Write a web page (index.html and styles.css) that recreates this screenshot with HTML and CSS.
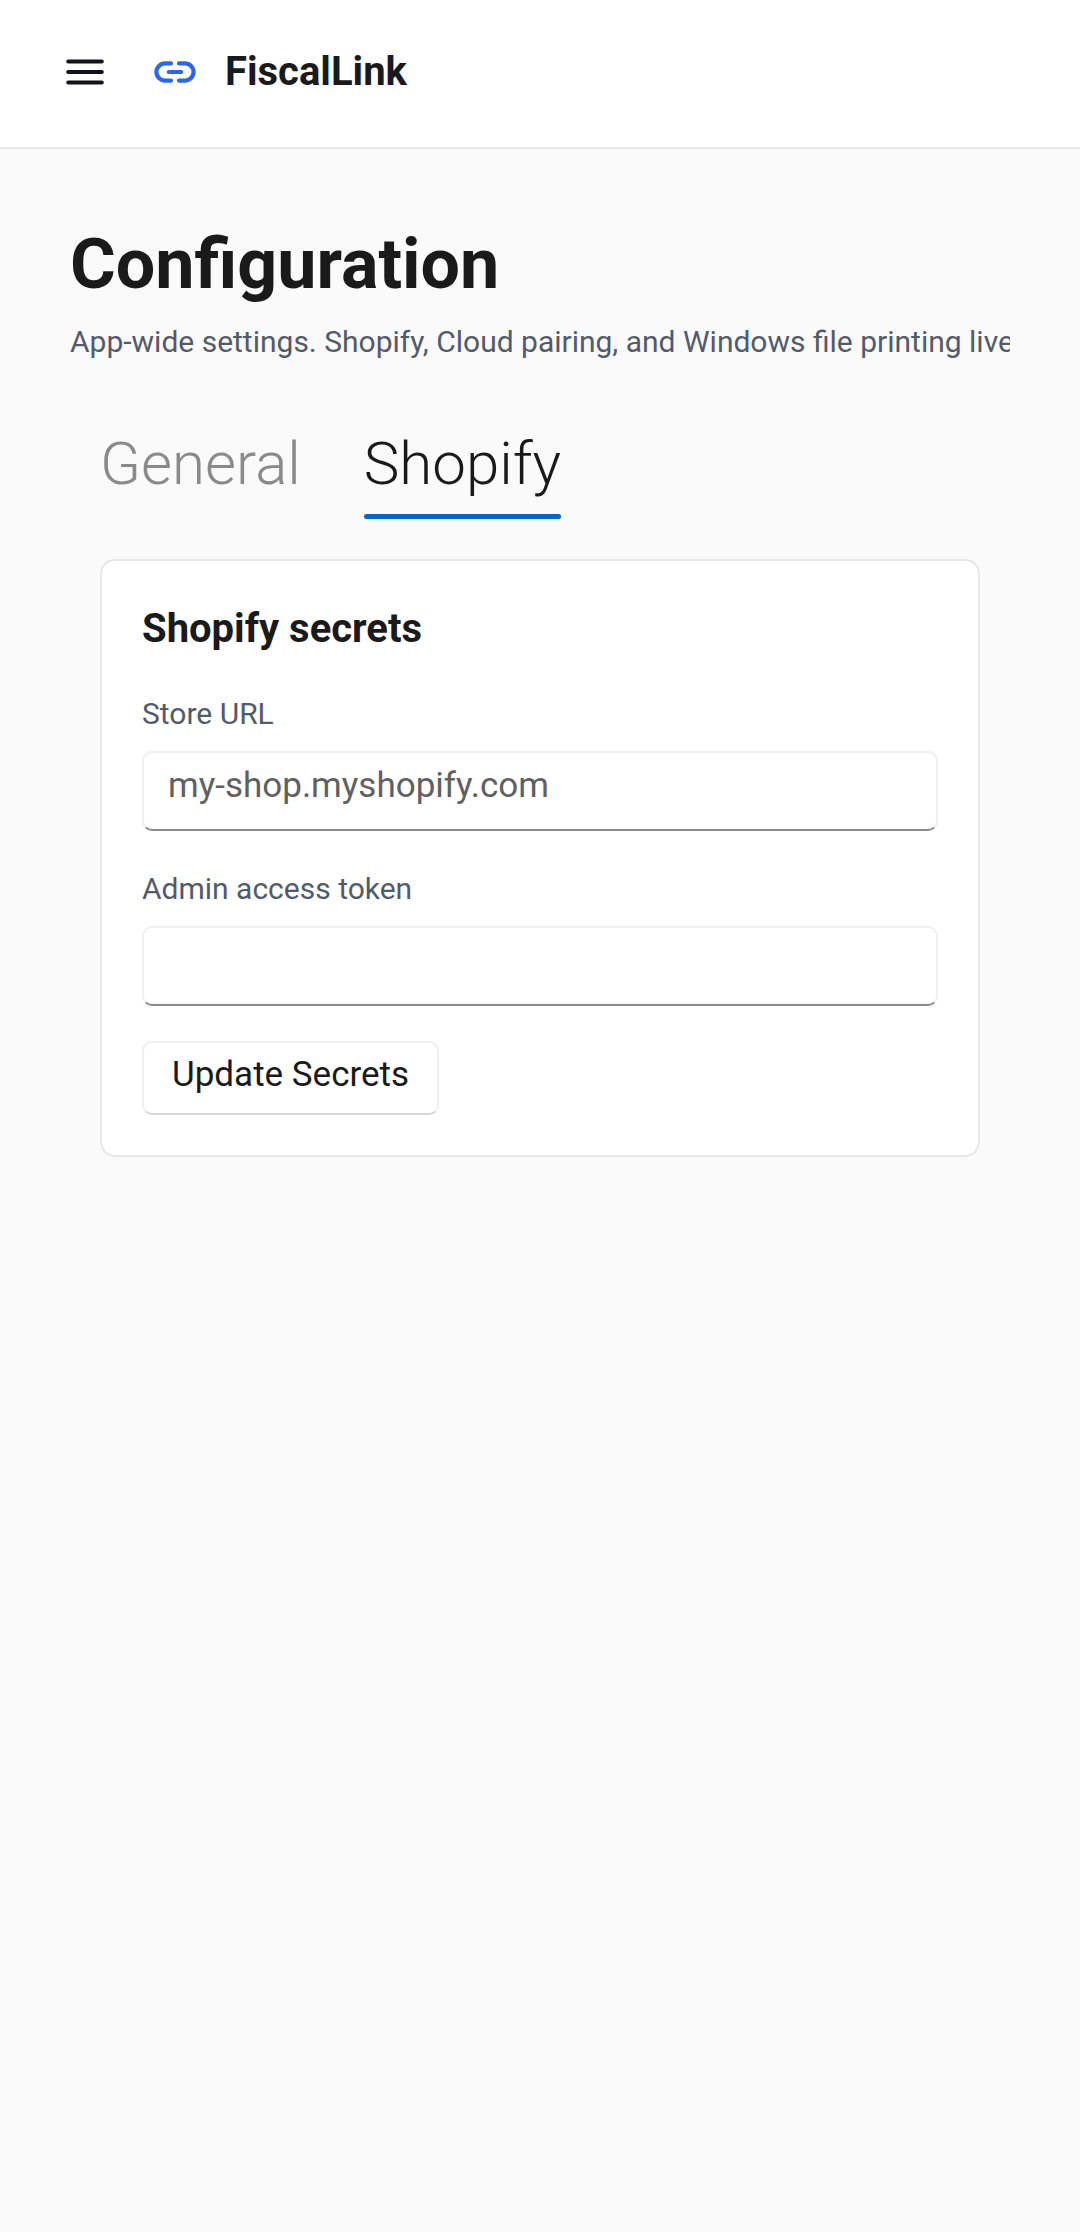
FILE: index.html
```html
<!DOCTYPE html>
<html lang="en">
<head>
<meta charset="utf-8">
<meta name="viewport" content="width=device-width, initial-scale=1">
<title>FiscalLink</title>
<link rel="stylesheet" href="styles.css">
</head>
<body>
<header class="topbar">
  <button class="menu-button" type="button" aria-label="Menu">
    <svg class="menu-icon" viewBox="0 0 38 26" fill="none" stroke="currentColor" stroke-width="4" stroke-linecap="round" aria-hidden="true"><path d="M2.2 2.5H35.8M2.2 13H35.8M2.2 23.5H35.8"/></svg>
  </button>
  <svg class="brand-icon" viewBox="0 0 42 22" fill="none" stroke="currentColor" stroke-width="4.2" stroke-linecap="round" aria-hidden="true"><path d="M17 2.4H11A8.6 8.6 0 0 0 11 19.6H17M25 2.4H31A8.6 8.6 0 0 1 31 19.6H25M14.8 11H27.2"/></svg>
  <span class="brand-name">FiscalLink</span>
</header>
<main class="page">
  <h1 class="title">Configuration</h1>
  <p class="subtitle">App-wide settings. Shopify, Cloud pairing, and Windows file printing live</p>
  <div class="content">
    <div class="tabs" role="tablist">
      <button class="tab" type="button" role="tab" aria-selected="false">General</button>
      <button class="tab tab-active" type="button" role="tab" aria-selected="true">Shopify</button>
    </div>
    <form class="card">
      <h2 class="card-title">Shopify secrets</h2>
      <div class="field">
        <label class="label" for="store-url">Store URL</label>
        <input class="input" id="store-url" type="text" placeholder="my-shop.myshopify.com">
      </div>
      <div class="field">
        <label class="label" for="token">Admin access token</label>
        <input class="input" id="token" type="password">
      </div>
      <button class="submit" type="button">Update Secrets</button>
    </form>
  </div>
</main>
</body>
</html>
```
FILE: styles.css
```css
* {
  box-sizing: border-box;
}

body {
  margin: 0;
  min-height: 100vh;
  background: #fafafa;
  color: #1a1a1a;
  font-family: Roboto, sans-serif;
}

button,
input {
  margin: 0;
  font: inherit;
  color: inherit;
}

.topbar {
  display: flex;
  align-items: center;
  padding: 48px 66px 52px;
  background: #fff;
  border-bottom: 2px solid #e5e7eb;
}

.menu-button {
  display: flex;
  padding: 0;
  border: 0;
  background: none;
  color: #111318;
}

.menu-icon {
  width: 38px;
  height: 26px;
}

.brand-icon {
  width: 42px;
  height: 22px;
  margin: 0 29px 0 50px;
  color: #2f66f0;
}

.brand-name {
  font-size: 40px;
  line-height: 47px;
  font-weight: 700;
}

.page {
  padding: 74px 70px;
}

.title {
  margin: 0 0 19px;
  font-size: 70px;
  line-height: 82px;
  font-weight: 700;
}

.subtitle {
  margin: 0;
  overflow: hidden;
  white-space: nowrap;
  font-size: 30px;
  line-height: 36px;
  color: #535b69;
}

.content {
  padding: 69px 30px 0;
}

.tabs {
  display: flex;
  gap: 63px;
  margin-bottom: 40px;
}

.tab {
  padding: 0;
  border: 0;
  background: none;
  font-size: 60px;
  line-height: 70px;
  font-weight: 300;
  color: #8a8a8a;
}

.tab-active {
  color: #1a1a1a;
}

.tab::after {
  content: "";
  display: block;
  height: 5px;
  margin-top: 15px;
  border-radius: 5px;
}

.tab-active::after {
  background: #0067c0;
}

.card {
  padding: 40px;
  background: #fff;
  border: 2px solid #e5e7eb;
  border-radius: 15px;
}

.card-title {
  margin: 0 0 39px;
  font-size: 40px;
  line-height: 56px;
  font-weight: 700;
}

.field {
  display: flex;
  flex-direction: column;
  gap: 19px;
  margin-bottom: 40px;
}

.field:last-of-type {
  margin-bottom: 35px;
}

.label {
  font-size: 30px;
  line-height: 36px;
  color: #535b69;
}

.input {
  width: 100%;
  height: 80px;
  padding: 11px 24px 23px;
  background: #fff;
  border: 2px solid #f0f0f0;
  border-bottom-color: #8a8a8a;
  border-radius: 10px;
  font-size: 35px;
  line-height: 42px;
}

.input::placeholder {
  color: #606060;
  opacity: 1;
}

.submit {
  display: block;
  padding: 11px 28px 17px;
  background: #fff;
  border: 2px solid #efefef;
  border-bottom-color: #d6d6d6;
  border-radius: 10px;
  font-size: 35px;
  line-height: 42px;
}
```
